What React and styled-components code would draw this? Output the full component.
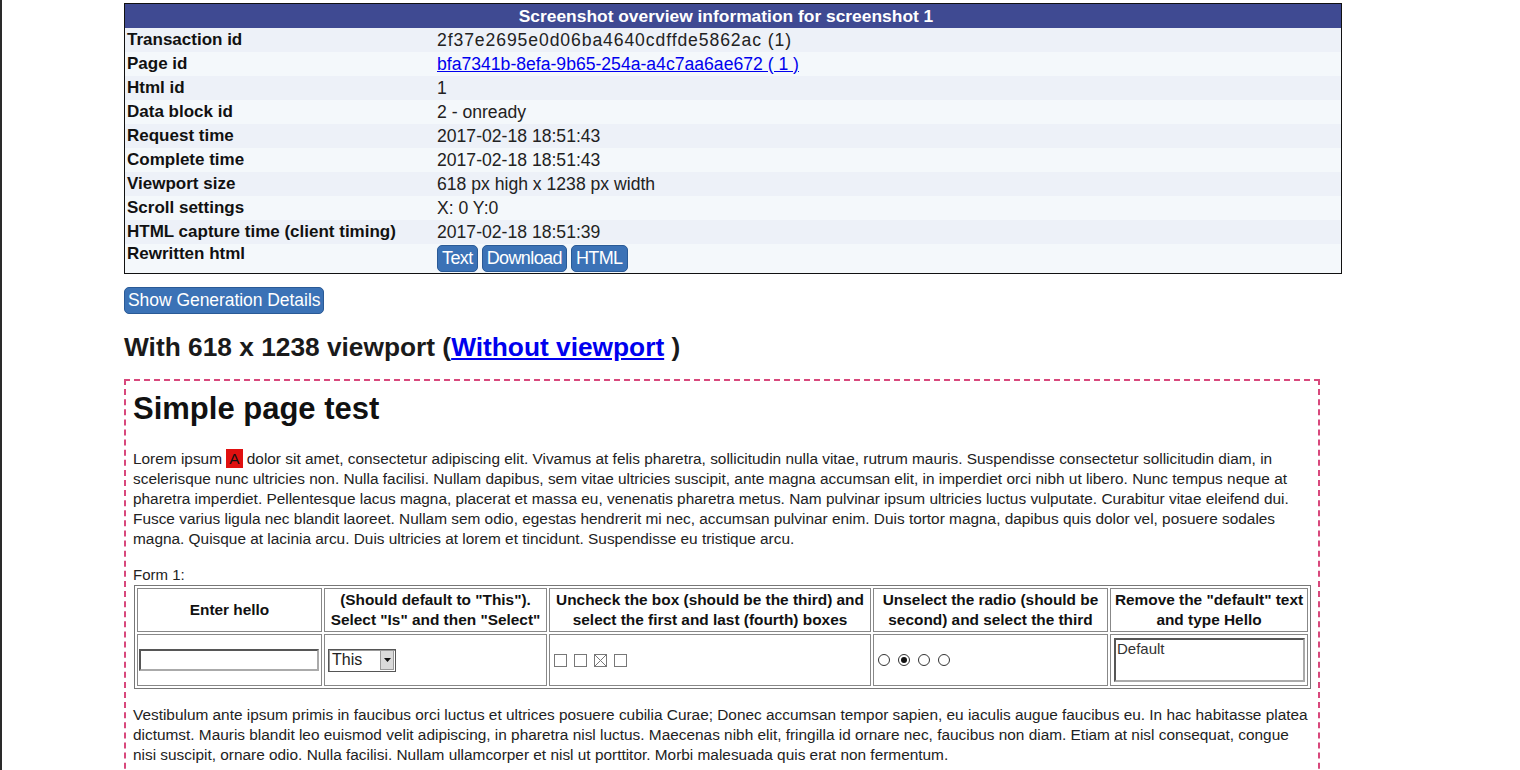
import React from "react";
import styled, { createGlobalStyle } from "styled-components";

const GlobalStyle = createGlobalStyle`
  html, body {
    margin: 0;
    padding: 0;
    background: #fff;
    font-family: "Liberation Sans", Arial, sans-serif;
    color: #222;
  }
`;

const overviewRows = [
  { label: "Transaction id", value: "2f37e2695e0d06ba4640cdffde5862ac (1)", wide: true },
  { label: "Page id", value: "bfa7341b-8efa-9b65-254a-a4c7aa6ae672 ( 1 )", link: true },
  { label: "Html id", value: "1" },
  { label: "Data block id", value: "2 - onready" },
  { label: "Request time", value: "2017-02-18 18:51:43" },
  { label: "Complete time", value: "2017-02-18 18:51:43" },
  { label: "Viewport size", value: "618 px high x 1238 px width" },
  { label: "Scroll settings", value: "X: 0 Y:0" },
  { label: "HTML capture time (client timing)", value: "2017-02-18 18:51:39" },
];

const introLines = [
  " dolor sit amet, consectetur adipiscing elit. Vivamus at felis pharetra, sollicitudin nulla vitae, rutrum mauris. Suspendisse consectetur sollicitudin diam, in",
  "scelerisque nunc ultricies non. Nulla facilisi. Nullam dapibus, sem vitae ultricies suscipit, ante magna accumsan elit, in imperdiet orci nibh ut libero. Nunc tempus neque at",
  "pharetra imperdiet. Pellentesque lacus magna, placerat et massa eu, venenatis pharetra metus. Nam pulvinar ipsum ultricies luctus vulputate. Curabitur vitae eleifend dui.",
  "Fusce varius ligula nec blandit laoreet. Nullam sem odio, egestas hendrerit mi nec, accumsan pulvinar enim. Duis tortor magna, dapibus quis dolor vel, posuere sodales",
  "magna. Quisque at lacinia arcu. Duis ultricies at lorem et tincidunt. Suspendisse eu tristique arcu.",
];

const outroLines = [
  "Vestibulum ante ipsum primis in faucibus orci luctus et ultrices posuere cubilia Curae; Donec accumsan tempor sapien, eu iaculis augue faucibus eu. In hac habitasse platea",
  "dictumst. Mauris blandit leo euismod velit adipiscing, in pharetra nisl luctus. Maecenas nibh elit, fringilla id ornare nec, faucibus non diam. Etiam at nisl consequat, congue",
  "nisi suscipit, ornare odio. Nulla facilisi. Nullam ullamcorper et nisl ut porttitor. Morbi malesuada quis erat non fermentum.",
];

const Page = styled.div`
  min-height: 770px;
  border-left: 2px solid #2a2a2a;
  padding: 3px 0 0 122px;
  box-sizing: border-box;
`;

const Overview = styled.table`
  width: 1218px;
  border: 1px solid #111;
  border-collapse: collapse;
  font-size: 17px;
`;

const HeaderCell = styled.th`
  background: #3f4a92;
  color: #fff;
  font-weight: bold;
  font-size: 17.4px;
  text-align: center;
  height: 24px;
  padding: 0 14px 0 0;
`;

const Row = styled.tr`
  background: ${(p) => (p.$odd ? "#f4f8fb" : "#edf1f8")};
`;

const Label = styled.td`
  font-weight: bold;
  color: #111;
  width: 310px;
  height: 24px;
  padding: 0 0 0 2px;
  vertical-align: ${(p) => (p.$top ? "top" : "middle")};
`;

const Value = styled.td`
  color: #222;
  padding: 0;
  font-size: 17.6px;
  letter-spacing: ${(p) => (p.$wide ? "0.9px" : "0")};
`;

const Link = styled.a`
  color: #0000ee;
  text-decoration: underline;
`;

const ButtonRow = styled.div`
  display: flex;
  gap: 4px;
  padding: 1px 0;
`;

const BlueButton = styled.button`
  font-family: "Liberation Sans", Arial, sans-serif;
  font-size: ${(p) => (p.$small ? "17.5px" : "18px")};
  color: #fff;
  background: #3b72b6;
  border: 1px solid #2a5a96;
  border-radius: 5px;
  height: 27px;
  padding: 0 ${(p) => (p.$small ? "3px" : "4px")};
  letter-spacing: ${(p) => (p.$small ? "-0.05px" : "-0.6px")};
  cursor: pointer;
`;

const DetailsWrap = styled.div`
  margin-top: 13px;
`;

const Title = styled.h2`
  margin: 18px 0 0;
  font-size: 26.3px;
  font-weight: bold;
  color: #1a1a1a;
  line-height: 30px;
`;

const Frame = styled.div`
  margin-top: 17px;
  width: 1196px;
  height: 420px;
  border: 2px dashed #d8487c;
  box-sizing: border-box;
  padding: 0 7px;
  color: #222;
`;

const FrameTitle = styled.h1`
  font-size: 31px;
  margin: 11px 0 0;
  color: #111;
  line-height: 34px;
`;

const Para = styled.div`
  font-size: 15.4px;
  line-height: 20px;
  margin-top: ${(p) => p.$gap};
`;

const Line = styled.div`
  white-space: nowrap;
`;

const Mark = styled.span`
  background: #e01010;
  color: #111;
  padding: 1px 3px;
`;

const FormLabel = styled.div`
  font-size: 15px;
  margin-top: 17px;
  line-height: 18px;
`;

const FormTable = styled.table`
  margin: 1px 0 0 1px;
  width: 1177px;
  table-layout: fixed;
  border: 1px solid #777;
  border-spacing: 2px;
  font-size: 15.4px;
`;

const Th = styled.th`
  border: 1px solid #888;
  font-weight: bold;
  color: #111;
  height: 42px;
  line-height: 20px;
  padding: 0;
  white-space: nowrap;
  width: ${(p) => p.$w};
`;

const Td = styled.td`
  border: 1px solid #888;
  height: 47px;
  padding: ${(p) => (p.$top ? "3px 2px 0" : "0 2px")};
  vertical-align: ${(p) => (p.$top ? "top" : "middle")};
`;

const TextInput = styled.div`
  height: 18px;
  margin-left: -1px;
  border: 2px inset #aaa;
  background: #fff;
`;

const Select = styled.div`
  display: inline-flex;
  align-items: center;
  justify-content: space-between;
  margin-left: 1px;
  width: 68px;
  height: 23px;
  border: 1px solid #555;
  box-shadow: inset 1px 1px 0 #999;
  font-size: 16px;
  padding-left: 3px;
  box-sizing: border-box;
`;

const SelectArrow = styled.span`
  width: 14px;
  height: 20px;
  margin-right: 1px;
  background: #dadada;
  border: 1px solid #999;
  box-sizing: border-box;
  display: flex;
  align-items: center;
  justify-content: center;
`;

const Checks = styled.div`
  display: flex;
  gap: ${(p) => p.$gap};
  align-items: center;
  padding-left: 2px;
`;

const Box = styled.span`
  width: 13px;
  height: 13px;
  border: 1px solid #777;
  box-sizing: border-box;
  display: inline-flex;
  align-items: center;
  justify-content: center;
`;

const Radio = styled.span`
  width: 12px;
  height: 12px;
  border: 1px solid #333;
  border-radius: 50%;
  box-sizing: border-box;
  display: inline-flex;
  align-items: center;
  justify-content: center;
  &::after {
    content: "";
    width: 6px;
    height: 6px;
    border-radius: 50%;
    background: ${(p) => (p.$on ? "#111" : "transparent")};
  }
`;

const TextArea = styled.div`
  height: 40px;
  margin-left: 1px;
  border: 2px inset #aaa;
  font-size: 15px;
  line-height: 18px;
  padding-left: 1px;
  color: #333;
`;

export default function App() {
  return (
    <>
      <GlobalStyle />
      <Page>
        <Overview>
          <tbody>
            <tr>
              <HeaderCell colSpan={2}>Screenshot overview information for screenshot 1</HeaderCell>
            </tr>
            {overviewRows.map((r, i) => (
              <Row key={r.label} $odd={i % 2 === 1}>
                <Label>{r.label}</Label>
                <Value $wide={r.wide}>{r.link ? <Link href="#">{r.value}</Link> : r.value}</Value>
              </Row>
            ))}
            <Row $odd>
              <Label $top>Rewritten html</Label>
              <Value>
                <ButtonRow>
                  <BlueButton>Text</BlueButton>
                  <BlueButton>Download</BlueButton>
                  <BlueButton>HTML</BlueButton>
                </ButtonRow>
              </Value>
            </Row>
          </tbody>
        </Overview>

        <DetailsWrap>
          <BlueButton $small>Show Generation Details</BlueButton>
        </DetailsWrap>

        <Title>
          With 618 x 1238 viewport (<Link href="#">Without viewport</Link> )
        </Title>

        <Frame>
          <FrameTitle>Simple page test</FrameTitle>
          <Para $gap="23px">
            {introLines.map((l, i) => (
              <Line key={i}>
                {i === 0 && (
                  <>
                    Lorem ipsum <Mark>A</Mark>
                  </>
                )}
                {l}
              </Line>
            ))}
          </Para>
          <FormLabel>Form 1:</FormLabel>
          <FormTable>
            <tbody>
              <tr>
                <Th $w="183px">Enter hello</Th>
                <Th $w="221px">
                  (Should default to "This").
                  <br />
                  Select "Is" and then "Select"
                </Th>
                <Th $w="320px">
                  Uncheck the box (should be the third) and
                  <br />
                  select the first and last (fourth) boxes
                </Th>
                <Th $w="233px">
                  Unselect the radio (should be
                  <br />
                  second) and select the third
                </Th>
                <Th>
                  Remove the "default" text
                  <br />
                  and type Hello
                </Th>
              </tr>
              <tr>
                <Td>
                  <TextInput />
                </Td>
                <Td>
                  <Select>
                    This
                    <SelectArrow>
                      <svg width="7" height="4" viewBox="0 0 7 4">
                        <path d="M0 0h7L3.5 4z" fill="#111" />
                      </svg>
                    </SelectArrow>
                  </Select>
                </Td>
                <Td>
                  <Checks $gap="7px">
                    <Box />
                    <Box />
                    <Box>
                      <svg width="11" height="11" viewBox="0 0 11 11">
                        <path d="M0 0L11 11M11 0L0 11" stroke="#777" strokeWidth="1" />
                      </svg>
                    </Box>
                    <Box />
                  </Checks>
                </Td>
                <Td>
                  <Checks $gap="8px">
                    <Radio />
                    <Radio $on />
                    <Radio />
                    <Radio />
                  </Checks>
                </Td>
                <Td $top>
                  <TextArea>Default</TextArea>
                </Td>
              </tr>
            </tbody>
          </FormTable>
          <Para $gap="16px">
            {outroLines.map((l, i) => (
              <Line key={i}>{l}</Line>
            ))}
          </Para>
        </Frame>
      </Page>
    </>
  );
}
